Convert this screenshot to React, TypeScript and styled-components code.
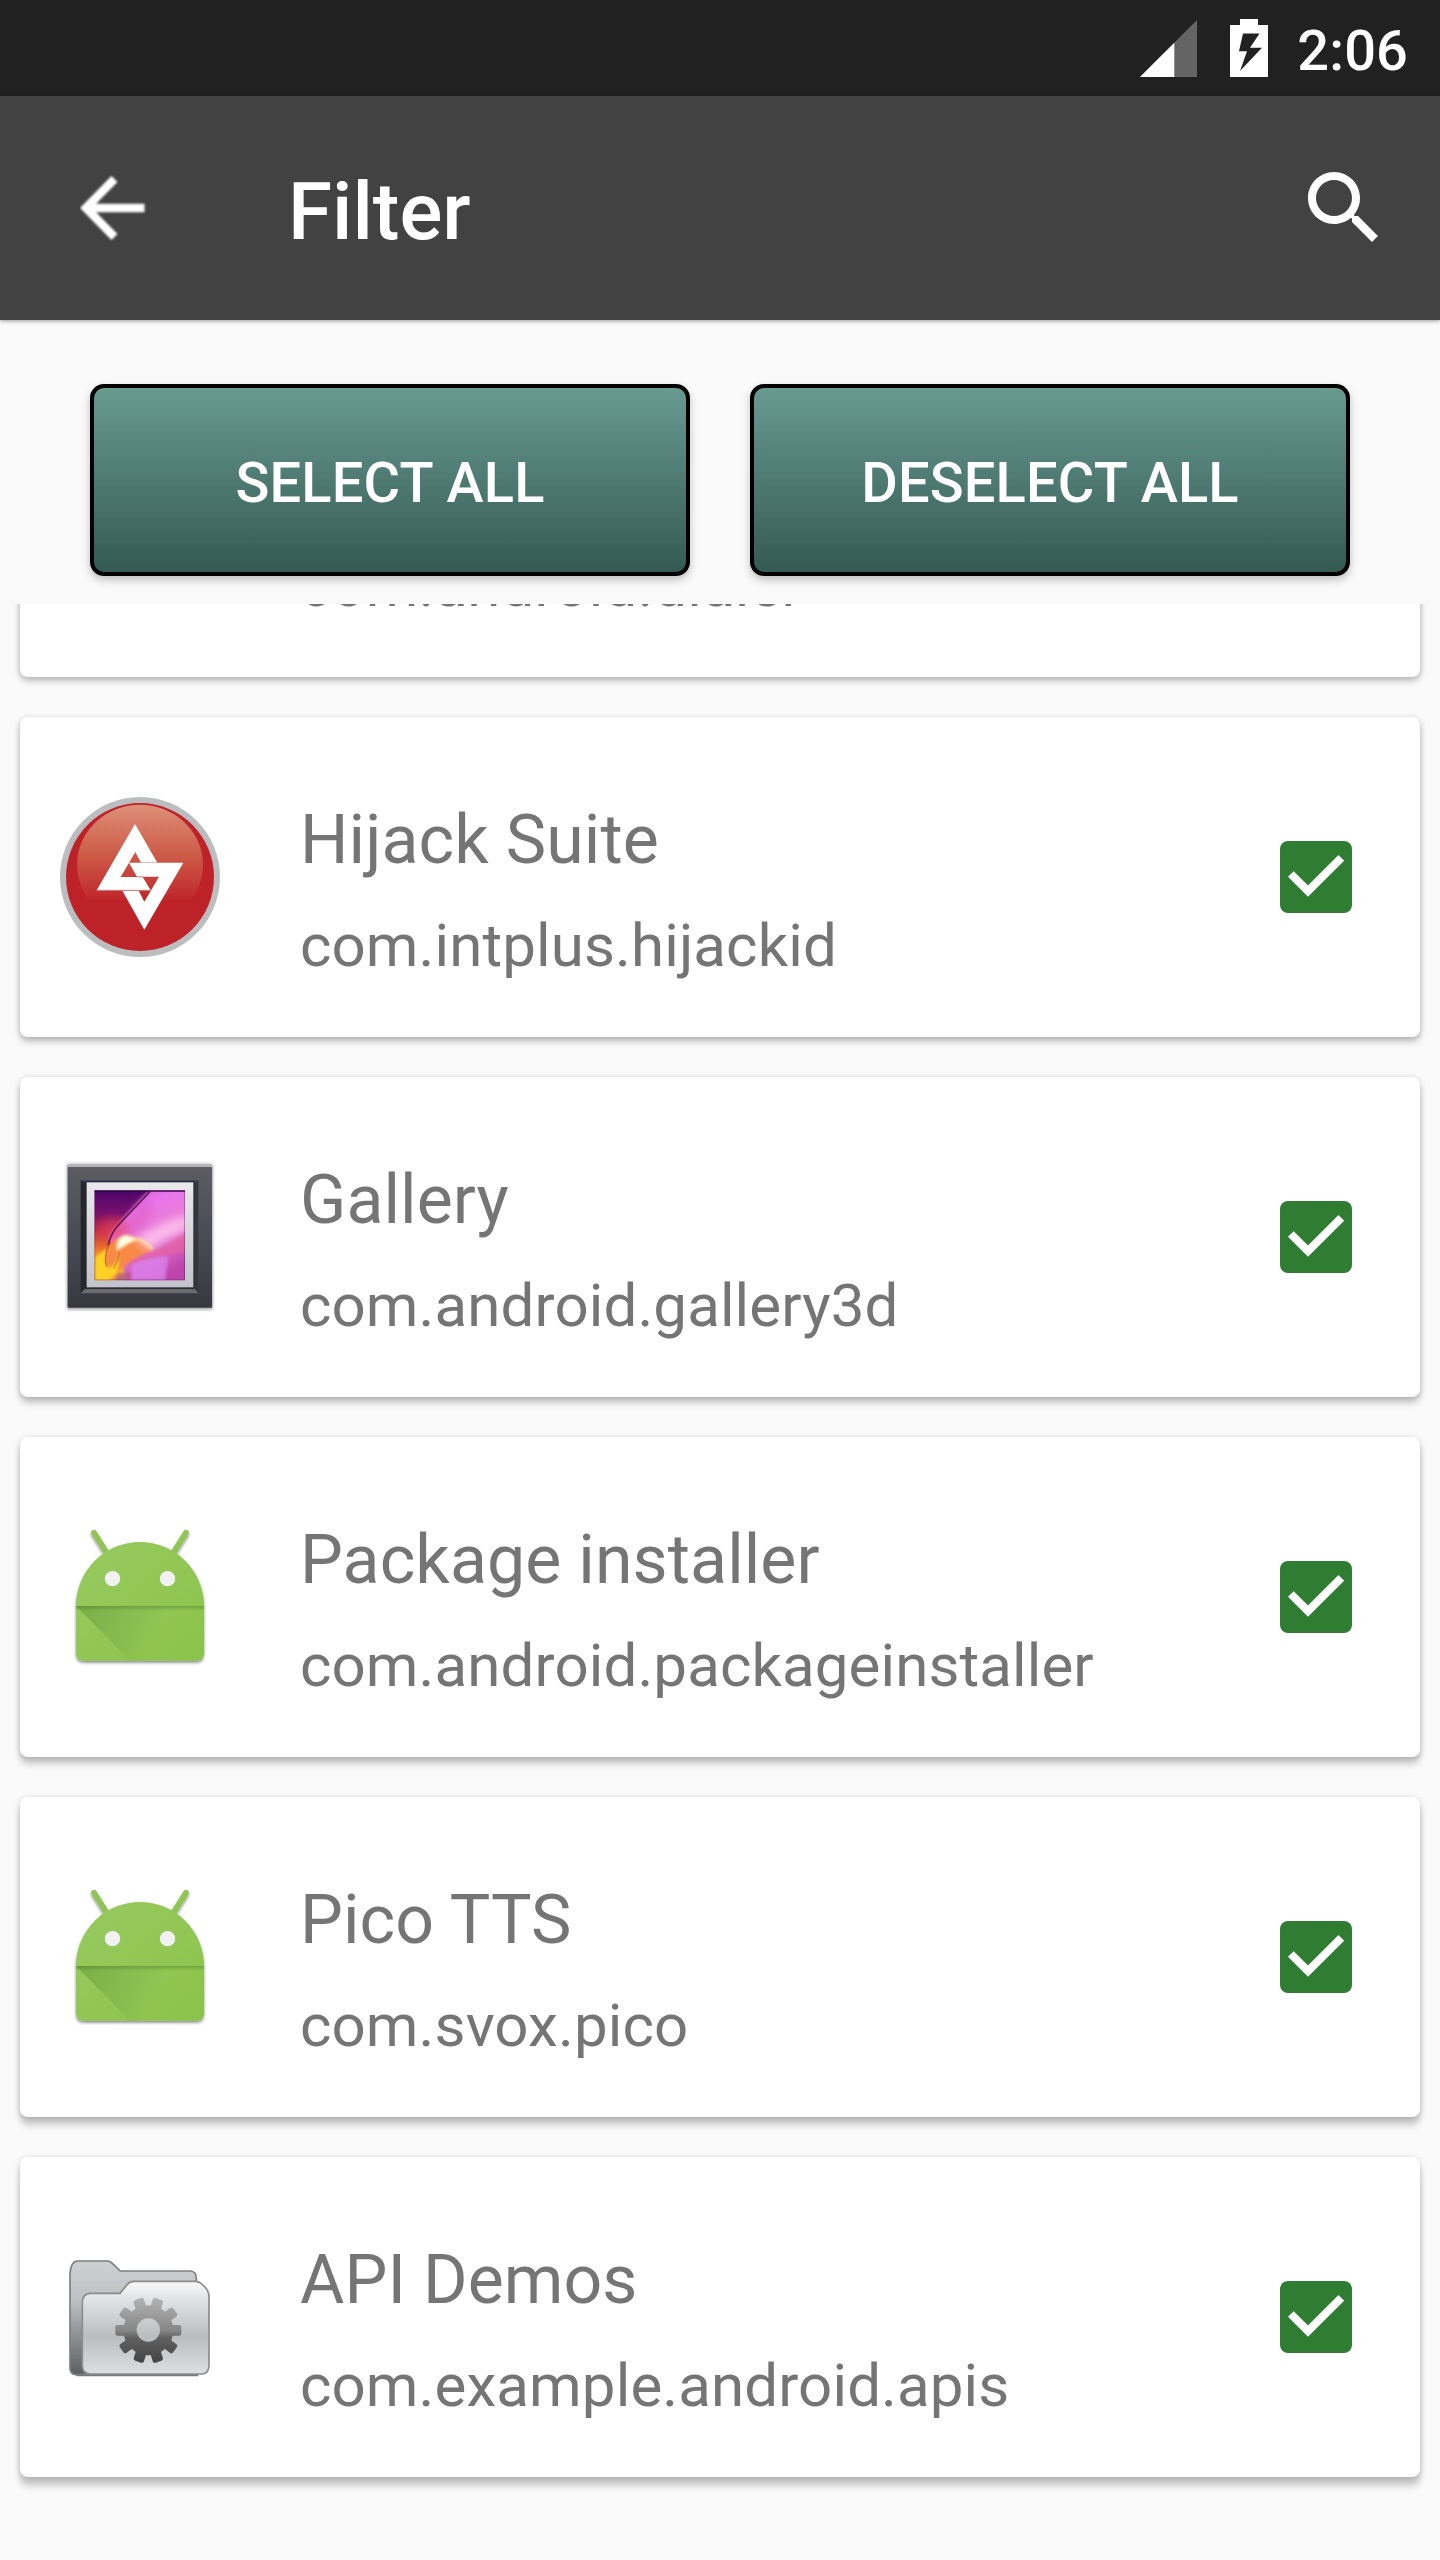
import React from "react";
import styled, { createGlobalStyle } from "styled-components";

const GlobalStyle = createGlobalStyle`
  * { box-sizing: border-box; }
  body { margin: 0; background: #fafafa; font-family: Roboto, sans-serif; }
`;

const Screen = styled.div`
  width: 1440px;
  height: 2560px;
  display: flex;
  flex-direction: column;
  overflow: hidden;
  background: #fafafa;
`;

const StatusBar = styled.div`
  height: 96px;
  flex: none;
  display: flex;
  justify-content: flex-end;
  align-items: flex-start;
  padding: 19px 32px 0 0;
  background: #212121;
`;

const SignalSvg = styled.svg`
  width: 58px;
  height: 58px;
  margin-right: 33px;
`;

const BatterySvg = styled.svg`
  width: 38px;
  height: 58px;
  margin-right: 29px;
`;

const Clock = styled.span`
  font-size: 56px;
  font-weight: 500;
  line-height: 64px;
  letter-spacing: 0.1px;
  color: #fff;
`;

const Toolbar = styled.header`
  height: 224px;
  flex: none;
  display: flex;
  align-items: center;
  padding: 0 48px 0 64px;
  background: #424242;
  box-shadow: 0 1px 4px rgba(0, 0, 0, 0.4);
`;

const IconButton = styled.button`
  display: flex;
  padding: 0;
  border: 0;
  background: none;
`;

const BarIcon = styled.svg`
  width: 96px;
  height: 96px;
`;

const Title = styled.h1`
  flex: 1;
  margin: 0 0 0 128px;
  padding-top: 8px;
  font-size: 80px;
  font-weight: 500;
  line-height: 96px;
  color: #fff;
`;

const Actions = styled.div`
  height: 284px;
  flex: none;
  display: flex;
  gap: 60px;
  padding: 64px 90px 28px;
`;

const ActionButton = styled.button`
  flex: 1;
  padding: 6px 0 0;
  border: 4px solid #000;
  border-radius: 14px;
  background: linear-gradient(#689a92, #4e7a72 50%, #345a52);
  box-shadow: 0 4px 8px rgba(0, 0, 0, 0.24);
  font-family: inherit;
  font-size: 56px;
  font-weight: 500;
  line-height: 64px;
  letter-spacing: 0.15px;
  color: #fff;
`;

const List = styled.main`
  flex: 1;
  min-height: 0;
  display: flex;
  flex-direction: column;
  justify-content: flex-end;
  gap: 40px;
  padding: 0 20px 83px;
  overflow: hidden;
`;

const Card = styled.article<{ $drop: number }>`
  height: 320px;
  flex: none;
  display: flex;
  align-items: center;
  padding: 0 68px 0 40px;
  border-radius: 8px;
  background: #fff;
  box-shadow: 0 ${(p) => p.$drop}px 7px rgba(0, 0, 0, 0.2),
    0 1px 6px rgba(0, 0, 0, 0.16);
`;

const AppIcon = styled.svg`
  width: 160px;
  height: 160px;
  flex: none;
`;

const Labels = styled.div`
  flex: 1;
  align-self: flex-start;
  display: flex;
  flex-direction: column;
  gap: 30px;
  padding: 83px 0 0 80px;
  color: #757575;
`;

const AppName = styled.span`
  height: 80px;
  font-size: 68px;
  line-height: 80px;
  letter-spacing: 0.08px;
`;

const PackageName = styled.span`
  font-size: 60px;
  line-height: 72px;
  letter-spacing: 0.12px;
`;

const CheckSvg = styled.svg`
  width: 72px;
  height: 72px;
`;

const Signal = () => (
  <SignalSvg viewBox="0 0 58 58">
    <path d="M58 1V58H1Z" fill="#646464" />
    <path d="M35.3 23.7V58H1Z" fill="#fff" />
  </SignalSvg>
);

const Battery = () => (
  <BatterySvg viewBox="0 0 38 58">
    <path
      fill="#fff"
      fillRule="evenodd"
      d="M10 0H28V6H38V58H0V6H10ZM13 14.5L9 32.3H17L10 52L32 28.7H20L29.5 14.5Z"
    />
  </BatterySvg>
);

const BackArrow = () => (
  <BarIcon viewBox="64 160 96 96">
    <defs>
      <filter id="soft">
        <feGaussianBlur stdDeviation="1.3" />
      </filter>
    </defs>
    <path
      d="M144.5 208H88M114.500 179L86 208L114.500 237"
      fill="none"
      stroke="#fff"
      strokeWidth="8.500"
      filter="url(#soft)"
    />
  </BarIcon>
);

const Search = () => (
  <BarIcon viewBox="0 0 24 24">
    <path
      fill="#fff"
      d="M15.5 14h-.79l-.28-.27C15.41 12.59 16 11.11 16 9.5 16 5.91 13.09 3 9.5 3S3 5.91 3 9.5 5.91 16 9.5 16c1.61 0 3.09-.59 4.23-1.57l.27.28v.79l5 4.99L20.49 19l-4.99-5zm-6 0C7.01 14 5 11.99 5 9.5S7.01 5 9.5 5 14 7.01 14 9.5 11.99 14 9.5 14z"
    />
  </BarIcon>
);

const Check = () => (
  <CheckSvg viewBox="0 0 216 216">
    <rect width="216" height="216" rx="24" fill="#2e7d32" />
    <path d="M32.500 99L84 150.500L184 50.500" fill="none" stroke="#fff" strokeWidth="24" />
  </CheckSvg>
);

const HijackIcon = () => (
  <AppIcon viewBox="60 51 480 480">
    <defs>
      <linearGradient id="gloss" x1="0" y1="76" x2="0" y2="372" gradientUnits="userSpaceOnUse">
        <stop offset="0" stopColor="#dd8f78" />
        <stop offset="0.5" stopColor="#cd5b48" />
        <stop offset="1" stopColor="#be2229" />
      </linearGradient>
    </defs>
    <circle cx="300" cy="291" r="240" fill="#bbbdbf" />
    <circle cx="300" cy="291" r="222" fill="#be2229" />
    <path d="M147 360A189 180 0 1 1 453 360Z" fill="url(#gloss)" />
    <path d="M285 132L352 248H303L286 216L242 291H308L332 331H170Z" fill="#fff" />
    <path d="M267 248H430L313 449L247 332H296L313 365L357 290.500H291Z" fill="#fff" />
    <path d="M303 247.500H352" stroke="#e9aaa4" strokeWidth="2.500" />
    <path d="M170 331H332M290 290.500H308" stroke="#d9797a" strokeWidth="2.500" />
  </AppIcon>
);

const GalleryIcon = () => (
  <AppIcon viewBox="60 51 480 480">
    <defs>
      <linearGradient id="frame" x1="0" y1="0" x2="0" y2="1">
        <stop offset="0" stopColor="#5d5c62" />
        <stop offset="0.5" stopColor="#494b55" />
        <stop offset="1" stopColor="#38393f" />
      </linearGradient>
      <linearGradient id="mat" x1="0" y1="0" x2="0" y2="1">
        <stop offset="0" stopColor="#e9e9eb" />
        <stop offset="1" stopColor="#c3c3cd" />
      </linearGradient>
      <linearGradient id="violet" x1="0" y1="0" x2="0" y2="1">
        <stop offset="0" stopColor="#4a0668" />
        <stop offset="0.25" stopColor="#77106e" />
        <stop offset="0.45" stopColor="#c22c43" />
        <stop offset="0.65" stopColor="#ee7424" />
        <stop offset="0.85" stopColor="#fbd020" />
        <stop offset="1" stopColor="#d99a20" />
      </linearGradient>
      <linearGradient id="pink" x1="0" y1="0" x2="0.4" y2="1">
        <stop offset="0" stopColor="#c659cc" />
        <stop offset="0.3" stopColor="#e874ea" />
        <stop offset="0.6" stopColor="#ea82d4" />
        <stop offset="1" stopColor="#bd45ac" />
      </linearGradient>
      <filter id="blur4" x="-30%" y="-30%" width="160%" height="160%">
        <feGaussianBlur stdDeviation="4" />
      </filter>
      <filter id="blur12" x="-50%" y="-50%" width="200%" height="200%">
        <feGaussianBlur stdDeviation="12" />
      </filter>
      <clipPath id="photo">
        <rect x="163" y="151" width="272" height="270" />
      </clipPath>
    </defs>
    <rect x="80" y="71" width="439" height="439" rx="6" fill="#000" opacity="0.3" filter="url(#blur4)" />
    <rect x="82" y="73" width="435" height="432" rx="5" fill="#b5b5b5" />
    <rect x="83" y="81" width="433" height="422" rx="3" fill="url(#frame)" />
    <path d="M122 120H475L460 130H140Z" fill="#41416b" />
    <path d="M122 120L140 130V444L122 460Z" fill="#26272c" />
    <path d="M475 120L460 130V444L475 460Z" fill="#35363f" />
    <path d="M122 460L140 442H460L475 460Z" fill="#6b6b6d" />
    <rect x="136" y="123" width="327" height="324" fill="#292a30" />
    <rect x="140" y="127" width="320" height="315" fill="url(#mat)" />
    <g clipPath="url(#photo)">
      <rect x="163" y="151" width="272" height="270" fill="url(#violet)" />
      <path d="M332 145H450V440H262L250 390L240 330L205 300Q212 268 240 245Z" fill="url(#pink)" filter="url(#blur4)" />
      <ellipse cx="225" cy="270" rx="45" ry="36" fill="#e63f62" opacity="0.6" filter="url(#blur12)" />
      <path d="M315 170Q260 225 250 270L300 275L340 220Z" fill="#dd58c0" opacity="0.5" filter="url(#blur12)" />
      <path d="M205 320Q245 270 300 300Q325 312 340 330Q300 345 265 370Q245 385 235 400L215 425H163V370Z" fill="#f88a45" filter="url(#blur4)" />
      <path d="M285 300Q370 240 445 228V270Q380 290 330 330Z" fill="#ffc4f0" opacity="0.85" filter="url(#blur12)" />
      <path d="M250 380Q300 345 360 325Q410 300 445 270V335Q360 345 280 372Z" fill="#e7609e" opacity="0.65" filter="url(#blur4)" />
      <path d="M274 374Q340 345 385 350L375 425H274Z" fill="#dc82ee" opacity="0.8" filter="url(#blur4)" />
      <path d="M232 400H272V425H225Z" fill="#b5568a" opacity="0.8" filter="url(#blur4)" />
      <path d="M200 325Q188 378 210 382Q232 375 235 335L234 395L205 425H163V355Z" fill="#fdd026" filter="url(#blur4)" />
      <path d="M230 332Q228 284 262 286L294 297Q262 310 230 332Z" fill="#fffde0" filter="url(#blur4)" />
      <path d="M290 296Q318 305 338 328" stroke="#ffe9a0" strokeWidth="7" fill="none" filter="url(#blur4)" />
      <path d="M330 155L240 250Q212 278 205 315" stroke="#410a38" strokeWidth="5" fill="none" opacity="0.75" />
      <path d="M205 315Q190 365 202 380" stroke="#7a3410" strokeWidth="4" fill="none" opacity="0.45" />
      <path d="M238 335Q235 360 222 385" stroke="#aa7610" strokeWidth="4" fill="none" opacity="0.6" />
      <path d="M163 153H435" stroke="#300840" strokeWidth="6" opacity="0.7" />
      <rect x="163" y="151" width="272" height="270" fill="none" stroke="#300840" strokeWidth="6" opacity="0.3" />
    </g>
  </AppIcon>
);

const AndroidIcon = () => (
  <AppIcon viewBox="60 51 480 480">
    <defs>
      <linearGradient id="droid" x1="0" y1="0" x2="1" y2="1">
        <stop offset="0" stopColor="#98ca60" />
        <stop offset="1" stopColor="#8bc34a" />
      </linearGradient>
      <linearGradient id="fold" x1="110" y1="320" x2="340" y2="420" gradientUnits="userSpaceOnUse">
        <stop offset="0" stopColor="#33691e" stopOpacity="0.28" />
        <stop offset="1" stopColor="#33691e" stopOpacity="0" />
      </linearGradient>
      <linearGradient id="seam" x1="0" y1="0" x2="0" y2="1">
        <stop offset="0" stopColor="#33691e" stopOpacity="0.35" />
        <stop offset="1" stopColor="#33691e" stopOpacity="0" />
      </linearGradient>
      <filter id="droidShadow" x="-10%" y="-10%" width="120%" height="125%">
        <feDropShadow dx="0" dy="6" stdDeviation="5" floodColor="#000" floodOpacity="0.45" />
      </filter>
    </defs>
    <g filter="url(#droidShadow)">
      <path d="M162 98L201 160M438 98L399 160" stroke="#90c556" strokeWidth="17" strokeLinecap="round" />
      <path
        d="M108 318A192 192 0 0 1 492 318V458Q492 482 468 482H132Q108 482 108 458Z"
        fill="url(#droid)"
      />
    </g>
    <path d="M108 318H492V458Q492 482 468 482H270Z" fill="url(#fold)" />
    <rect x="108" y="318" width="384" height="14" fill="url(#seam)" />
    <circle cx="217.500" cy="236" r="23" fill="#f1f1f1" />
    <circle cx="382.500" cy="236" r="23" fill="#f1f1f1" />
  </AppIcon>
);

const FolderIcon = () => (
  <AppIcon viewBox="60 21 480 480">
    <defs>
      <linearGradient id="back" x1="0" y1="92" x2="0" y2="436" gradientUnits="userSpaceOnUse">
        <stop offset="0" stopColor="#cfd0d2" />
        <stop offset="0.35" stopColor="#bfc0c3" />
        <stop offset="0.6" stopColor="#97989b" />
        <stop offset="1" stopColor="#5c5d60" />
      </linearGradient>
      <linearGradient id="front" x1="0" y1="152" x2="0" y2="432" gradientUnits="userSpaceOnUse">
        <stop offset="0" stopColor="#f9f9f9" />
        <stop offset="0.25" stopColor="#dcdddf" />
        <stop offset="0.52" stopColor="#c3c4c6" />
        <stop offset="0.6" stopColor="#bbbcbe" />
        <stop offset="1" stopColor="#dedfe0" />
      </linearGradient>
      <linearGradient id="gear" x1="0" y1="202" x2="0" y2="402" gradientUnits="userSpaceOnUse">
        <stop offset="0" stopColor="#b4b4b4" />
        <stop offset="0.5" stopColor="#868686" />
        <stop offset="0.6" stopColor="#626262" />
        <stop offset="1" stopColor="#414141" />
      </linearGradient>
      <filter id="folderSoft" x="-10%" y="-10%" width="120%" height="120%">
        <feGaussianBlur stdDeviation="1.500" />
      </filter>
      <mask id="gearShape">
        <circle cx="325" cy="301" r="75" fill="#fff" />
        {Array.from({ length: 10 }, (_, i) => (
          <rect
            key={i}
            x="385"
            y="285"
            width="39"
            height="32"
            rx="7"
            fill="#fff"
            transform={`rotate(${i * 36} 325 301)`}
          />
        ))}
        <circle cx="325" cy="300" r="35" fill="#000" />
      </mask>
    </defs>
    <g filter="url(#folderSoft)">
      <path
        d="M90 130Q94 93 112 93H204Q211 94 217 100L241 123H452Q468 124 469 145V434H106Q90 432 90 414Z"
        fill="url(#back)"
        stroke="#7e7f81"
        strokeWidth="5"
      />
      <path d="M110 435H475" stroke="#77787a" strokeWidth="7" />
      <path
        d="M127 216Q128 191 152 190H240L262 163Q270 154 282 154H466Q478 154 490 166Q507 182 507 200V408Q505 432 485 432H150Q129 431 127 410Z"
        fill="url(#front)"
        stroke="#8b8c8e"
        strokeWidth="5"
      />
      <circle cx="325" cy="300" r="38" fill="none" stroke="#e6e6e7" strokeWidth="3" opacity="0.6" />
      <rect x="220" y="196" width="210" height="210" fill="url(#gear)" mask="url(#gearShape)" />
    </g>
  </AppIcon>
);

interface AppEntry {
  name?: string;
  pkg: string;
  Icon: React.ComponentType;
}

const apps: AppEntry[] = [
  { pkg: "com.android.dialer", Icon: AndroidIcon },
  { name: "Hijack Suite", pkg: "com.intplus.hijackid", Icon: HijackIcon },
  { name: "Gallery", pkg: "com.android.gallery3d", Icon: GalleryIcon },
  { name: "Package installer", pkg: "com.android.packageinstaller", Icon: AndroidIcon },
  { name: "Pico TTS", pkg: "com.svox.pico", Icon: AndroidIcon },
  { name: "API Demos", pkg: "com.example.android.apis", Icon: FolderIcon },
];

export default function App() {
  return (
    <>
      <GlobalStyle />
      <Screen>
        <StatusBar>
          <Signal />
          <Battery />
          <Clock>2:06</Clock>
        </StatusBar>
        <Toolbar>
          <IconButton aria-label="Back">
            <BackArrow />
          </IconButton>
          <Title>Filter</Title>
          <IconButton aria-label="Search">
            <Search />
          </IconButton>
        </Toolbar>
        <Actions>
          <ActionButton>SELECT ALL</ActionButton>
          <ActionButton>DESELECT ALL</ActionButton>
        </Actions>
        <List>
          {apps.map(({ name, pkg, Icon }, i) => (
            <Card key={pkg} $drop={4 + i}>
              <Icon />
              <Labels>
                <AppName>{name}</AppName>
                <PackageName>{pkg}</PackageName>
              </Labels>
              <Check />
            </Card>
          ))}
        </List>
      </Screen>
    </>
  );
}
